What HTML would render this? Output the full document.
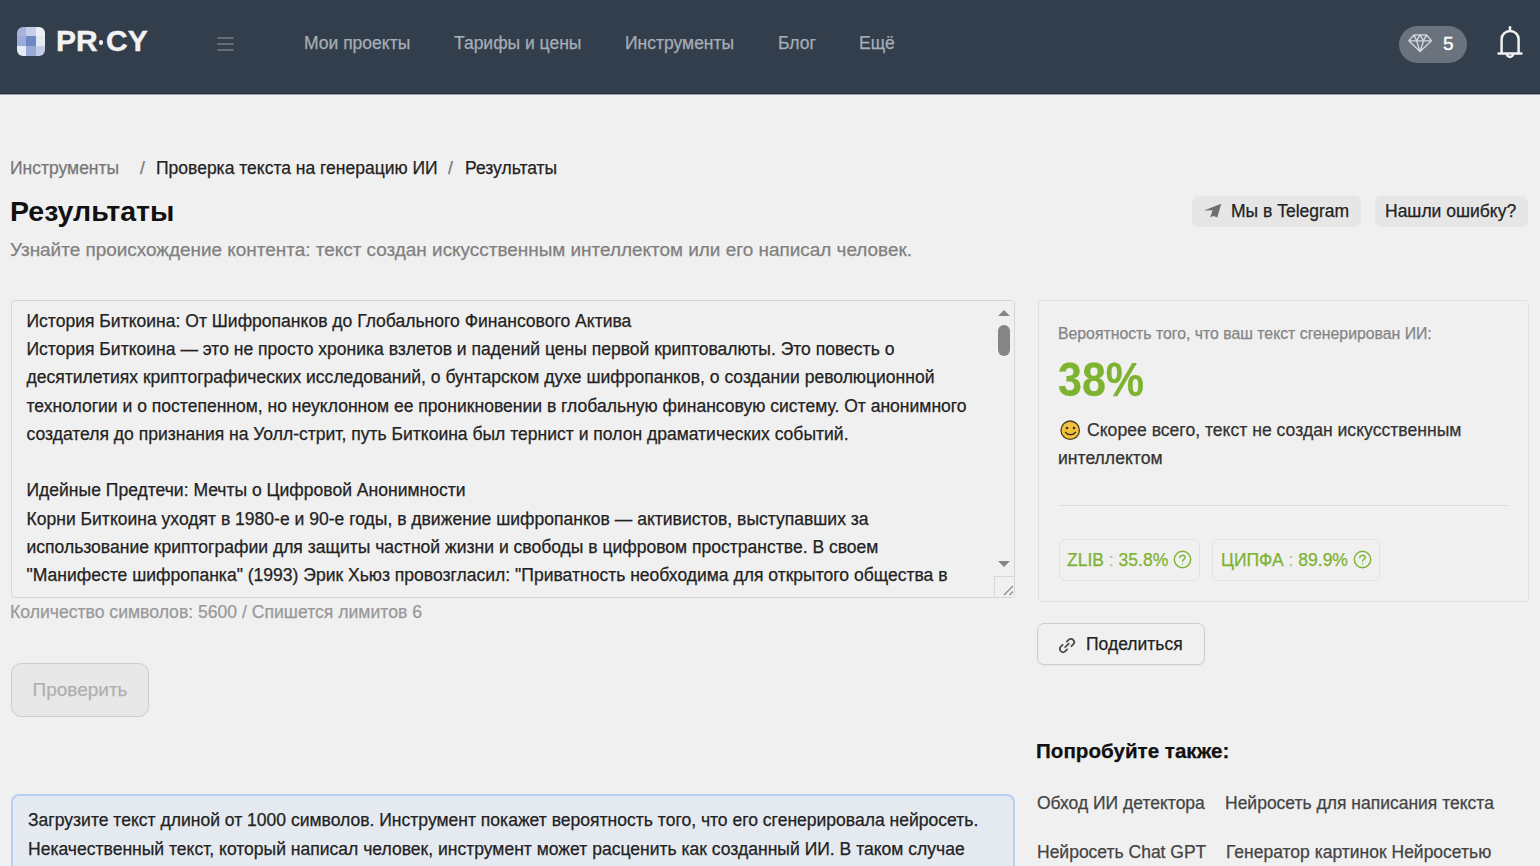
<!DOCTYPE html>
<html lang="ru">
<head>
<meta charset="utf-8">
<title>Результаты</title>
<style>
*{box-sizing:border-box;margin:0;padding:0}
html,body{width:1540px;height:866px;overflow:hidden;background:#f0f0f0;font-family:"Liberation Sans",sans-serif;color:#222}
body *{-webkit-text-stroke:0.25px currentColor}
.abs{position:absolute;white-space:nowrap}
#hdr{position:absolute;left:0;top:0;width:1540px;height:94px;background:#333e4c}
#hdrline{position:absolute;left:0;top:93px;width:1540px;height:3px;background:linear-gradient(#282f3b 0,#282f3b 1px,#9a9ea5 1px,#9a9ea5 2px,#f4f6f9 2px)}
.logo{position:absolute;left:17px;top:27px;width:28px;height:29px;border-radius:6px;overflow:hidden;display:grid;grid-template-columns:9px 9.5px 9.5px;grid-template-rows:9px 10px 10px;filter:blur(0.5px)}
.logotext{position:absolute;top:24px;font-size:30px;font-weight:bold;color:#f2f2f2;letter-spacing:0px;-webkit-text-stroke:0.4px #f2f2f2}
.nav{position:absolute;top:32.5px;font-size:17.5px;color:#a6adb6}
.ham{position:absolute;left:217px;width:17px;height:2px;border-radius:1px;background:#646c78}
.pill{position:absolute;left:1399px;top:25.5px;width:68px;height:37px;border-radius:18.5px;background:#6a727d}
.crumb{position:absolute;top:157.7px;font-size:17.5px}
h1{position:absolute;left:10px;top:194.7px;font-size:28.5px;-webkit-text-stroke:0;font-weight:bold;color:#111}
.sub{position:absolute;left:10px;top:239px;font-size:18.93px;color:#808080}
.btn{position:absolute;top:196px;height:31px;border-radius:6px;background:#e6e6e6;font-size:17.5px;color:#222}
.ta{position:absolute;left:11px;top:300px;width:1004px;height:298px;border:1px solid #d6d6d6;border-radius:4px;background:#f0f0f0;overflow:hidden}
.ta .txt{position:absolute;left:14.5px;top:5.7px;font-size:17.55px;line-height:28.3px;color:#222;white-space:nowrap}
.cnt{position:absolute;left:10px;top:602px;font-size:17.6px;color:#999}
.chk{position:absolute;left:11px;top:663px;width:138px;height:54px;border:1px solid #cdcdcd;border-radius:10px;background:#e8e8e8;font-size:19px;color:#b0b0b0;text-align:center;line-height:52px}
.info{position:absolute;left:11px;top:794px;width:1004px;height:100px;border:2px solid #b9cff1;border-radius:8px;background:#e5e9f0}
.info .txt{position:absolute;left:15px;top:10px;font-size:17.55px;line-height:28.5px;color:#222;white-space:nowrap}
.card{position:absolute;left:1038px;top:300px;width:491px;height:302px;border:1px solid #e0e0e0;border-radius:4px;background:#f0f0f0}
.badge{position:absolute;top:238px;height:42px;border:1px solid #e3e3e3;border-radius:7px;color:#7db330;font-size:17.5px;line-height:40px}
.qi{position:absolute;top:10px}
.share{position:absolute;left:1037px;top:623px;width:168px;height:42px;border:1px solid #cdcdcd;border-radius:7px;box-shadow:0 1px 0 rgba(0,0,0,0.04);background:#f0f0f0;font-size:17.5px;color:#222}
.try{position:absolute;left:1036px;top:739px;font-size:20.6px;font-weight:bold;color:#111}
.lnk{position:absolute;font-size:17.5px;color:#444}
</style>
</head>
<body>
<div id="hdr">
  <div class="logo">
    <span style="background:#a6b3db"></span><span style="background:#c5cfea"></span><span style="background:#eceff7"></span>
    <span style="background:#9cacd9"></span><span style="background:#6f87c5"></span><span style="background:#e4e8f2"></span>
    <span style="background:#e6eaf3"></span><span style="background:#98a9d6"></span><span style="background:#c3cce6"></span>
  </div>
  <div class="logotext" style="left:56px">PR</div><div style="position:absolute;left:98.8px;top:40.4px;width:4.6px;height:4.6px;border-radius:50%;background:#f2f2f2"></div><div class="logotext" style="left:106px">CY</div>
  <div class="ham" style="top:37px"></div>
  <div class="ham" style="top:43px"></div>
  <div class="ham" style="top:49px"></div>
  <div class="nav" style="left:304px">Мои проекты</div>
  <div class="nav" style="left:454px">Тарифы и цены</div>
  <div class="nav" style="left:625px">Инструменты</div>
  <div class="nav" style="left:778px">Блог</div>
  <div class="nav" style="left:859px">Ещё</div>
  <div class="pill">
    <svg style="position:absolute;left:9px;top:8.5px" width="25" height="20" viewBox="0 0 25 20" fill="none" stroke="#d3d6db" stroke-width="1.35" stroke-linejoin="round"><path d="M5.9 0.9 L18.3 0.9 L23.5 6.8 L12.1 17.6 L0.8 6.8 Z M0.8 6.8 H23.5 M12.1 0.9 L8.6 6.8 L12.1 17.6 L15.6 6.8 Z M5.9 0.9 L8.6 6.8 M18.3 0.9 L15.6 6.8"/></svg>
    <div style="position:absolute;left:44px;top:7.5px;font-size:19px;color:#fff;-webkit-text-stroke:0.35px #fff">5</div>
  </div>
  <svg style="position:absolute;left:1494px;top:22px" width="32" height="40" viewBox="0 0 32 40" fill="none" stroke="#f0f0f0" stroke-width="2.5" stroke-linecap="round"><path d="M16 5.2 V7.6"/><path d="M7.6 31 V17 A8.5 8 0 0 1 24.6 17 V31" stroke-linecap="butt"/><path d="M4.6 31.4 H27.4"/><path d="M12.7 31.6 A3.3 3.3 0 0 0 19.3 31.6" stroke-linecap="butt"/></svg>
</div>
<div id="hdrline"></div>

<div class="crumb" style="left:10px;color:#777">Инструменты</div>
<div class="crumb" style="left:140px;color:#777">/</div>
<div class="crumb" style="left:156px;color:#222">Проверка текста на генерацию ИИ</div>
<div class="crumb" style="left:448px;color:#777">/</div>
<div class="crumb" style="left:465px;color:#222">Результаты</div>

<h1>Результаты</h1>
<div class="sub">Узнайте происхождение контента: текст создан искусственным интеллектом или его написал человек.</div>

<div class="btn" style="left:1192px;width:169px">
  <svg style="position:absolute;left:10.5px;top:6.5px" width="20" height="17" viewBox="0 0 20 17"><path d="M1 7.6 L18.2 0.8 L14.3 14.5 L10.4 13.1 L7.2 14.3 L9.6 7.2 Z" fill="#6f6f6f"/></svg>
  <div class="abs" style="left:39px;top:5px">Мы в Telegram</div>
</div>
<div class="btn" style="left:1375px;width:153px">
  <div class="abs" style="left:10px;top:5px">Нашли ошибку?</div>
</div>

<div class="ta">
  <div class="txt">История Биткоина: От Шифропанков до Глобального Финансового Актива<br>История Биткоина — это не просто хроника взлетов и падений цены первой криптовалюты. Это повесть о<br>десятилетиях криптографических исследований, о бунтарском духе шифропанков, о создании революционной<br>технологии и о постепенном, но неуклонном ее проникновении в глобальную финансовую систему. От анонимного<br>создателя до признания на Уолл-стрит, путь Биткоина был тернист и полон драматических событий.<br><br>Идейные Предтечи: Мечты о Цифровой Анонимности<br>Корни Биткоина уходят в 1980-е и 90-е годы, в движение шифропанков — активистов, выступавших за<br>использование криптографии для защиты частной жизни и свободы в цифровом пространстве. В своем<br>"Манифесте шифропанка" (1993) Эрик Хьюз провозгласил: "Приватность необходима для открытого общества в</div>
  <div style="position:absolute;left:980px;top:0;width:22px;height:296px;background:#f0f0f0"></div>
  <svg style="position:absolute;left:985.5px;top:7.5px" width="12" height="8" viewBox="0 0 12 8"><path d="M0 7 L6 1 L12 7 Z" fill="#858585"/></svg>
  <div style="position:absolute;left:986px;top:24px;width:12px;height:31px;border-radius:6px;background:#858585"></div>
  <svg style="position:absolute;left:985.5px;top:259px" width="12" height="8" viewBox="0 0 12 8"><path d="M0 1 L12 1 L6 7 Z" fill="#858585"/></svg>
  <div style="position:absolute;left:982px;top:275px;width:22px;height:22px;border-left:1px solid #d8d8d8;border-top:1px solid #d8d8d8;background:#f0f0f0"></div>
  <svg style="position:absolute;left:983.8px;top:277.5px" width="18" height="18" viewBox="0 0 18 18" stroke="#8a8a8a" stroke-width="1.2"><path d="M8 16 L17 7 M13.5 16 L17 12.5"/></svg>
</div>

<div class="cnt">Количество символов: 5600 / Спишется лимитов 6</div>
<div class="chk">Проверить</div>

<div class="info">
  <div class="txt">Загрузите текст длиной от 1000 символов. Инструмент покажет вероятность того, что его сгенерировала нейросеть.<br>Некачественный текст, который написал человек, инструмент может расценить как созданный ИИ. В таком случае</div>
</div>

<div class="card">
  <div class="abs" style="left:19px;top:24px;font-size:15.8px;color:#858585">Вероятность того, что ваш текст сгенерирован ИИ:</div>
  <div class="abs" style="left:19px;top:51px;font-size:47.5px;font-weight:bold;color:#7db330;transform:scaleX(0.905);transform-origin:0 0">38%</div>
  <svg style="position:absolute;left:21px;top:118.5px" width="21" height="21" viewBox="0 0 21 21"><circle cx="10.2" cy="10.2" r="9.2" fill="#f2c23c" stroke="#4b3d22" stroke-width="1.3"/><circle cx="7" cy="8" r="1.3" fill="#3e3220"/><circle cx="14" cy="8" r="1.3" fill="#3e3220"/><path d="M5.6 12.4 C7.5 15.4 13.5 15.4 15.4 12.4" fill="none" stroke="#3e3220" stroke-width="1.5" stroke-linecap="round"/></svg>
  <div class="abs" style="left:19px;top:115px;font-size:17.6px;line-height:28.2px;color:#333"><span style="display:inline-block;width:29px"></span>Скорее всего, текст не создан искусственным<br>интеллектом</div>
  <div style="position:absolute;left:19px;top:204px;width:450px;height:1px;background:#dedede"></div>
  <div class="badge" style="left:20px;width:141px"><span class="abs" style="left:7px;top:0">ZLIB <span style="color:#a9c98a">:</span> 35.8%</span><svg class="qi" style="left:113px" width="19" height="19" viewBox="0 0 19 19" fill="none" stroke="#7db330" stroke-width="1.4"><circle cx="9.5" cy="9.5" r="8.2"/><path d="M6.8 7.6 C6.8 4.6 12.2 4.6 12.2 7.4 C12.2 9.2 9.6 9.4 9.6 11.2" stroke-linecap="round"/><circle cx="9.6" cy="13.9" r="0.6" fill="#7db330" stroke="none"/></svg></div>
  <div class="badge" style="left:173px;width:168px"><span class="abs" style="left:8px;top:0">ЦИПФА <span style="color:#a9c98a">:</span> 89.9%</span><svg class="qi" style="left:140px" width="19" height="19" viewBox="0 0 19 19" fill="none" stroke="#7db330" stroke-width="1.4"><circle cx="9.5" cy="9.5" r="8.2"/><path d="M6.8 7.6 C6.8 4.6 12.2 4.6 12.2 7.4 C12.2 9.2 9.6 9.4 9.6 11.2" stroke-linecap="round"/><circle cx="9.6" cy="13.9" r="0.6" fill="#7db330" stroke="none"/></svg></div>
</div>

<div class="share">
  <svg style="position:absolute;left:20px;top:13px" width="18" height="17" viewBox="0 0 18 17" fill="none" stroke="#4a4a4a" stroke-width="1.75" stroke-linecap="round"><path d="M7.2 10.2 L10.8 6.6"/><path d="M8.8 4.6 L10.6 2.8 C11.9 1.5 13.9 1.5 15.2 2.8 C16.5 4.1 16.5 6.1 15.2 7.4 L13.4 9.2"/><path d="M9.2 12.4 L7.4 14.2 C6.1 15.5 4.1 15.5 2.8 14.2 C1.5 12.9 1.5 10.9 2.8 9.6 L4.6 7.8"/></svg>
  <div class="abs" style="left:48px;top:9.5px">Поделиться</div>
</div>

<div class="try">Попробуйте также:</div>
<div class="lnk" style="left:1037px;top:793px">Обход ИИ детектора</div>
<div class="lnk" style="left:1225px;top:793px">Нейросеть для написания текста</div>
<div class="lnk" style="left:1037px;top:841.5px">Нейросеть Chat GPT</div>
<div class="lnk" style="left:1226px;top:841.5px">Генератор картинок Нейросетью</div>
</body>
</html>
